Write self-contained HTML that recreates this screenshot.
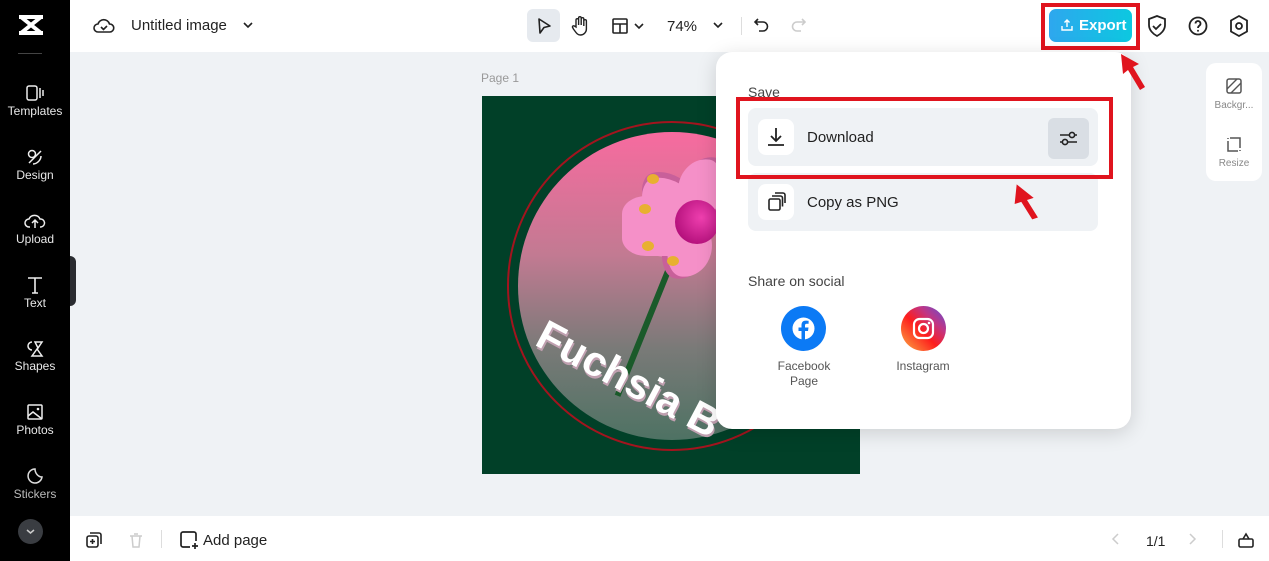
<!DOCTYPE html>
<html><head><meta charset="utf-8"><style>
*{box-sizing:border-box;margin:0;padding:0}
body{width:1269px;height:561px;overflow:hidden;font-family:"Liberation Sans",sans-serif;background:#eff2f5;position:relative;color:#1f1f1f}
.abs{position:absolute}
.side{left:0;top:0;width:70px;height:561px;background:#000}
.si{position:absolute;left:0;width:70px;text-align:center;color:#e8e8e8;font-size:12px}
.si svg{display:block;margin:0 auto 2px}
.top{left:70px;top:0;width:1199px;height:52px;background:#fff}
.bot{left:70px;top:516px;width:1199px;height:45px;background:#fff}
.pop{left:716px;top:52px;width:415px;height:377px;background:#fff;border-radius:16px;box-shadow:0 4px 20px rgba(0,0,0,.15)}
.row{position:absolute;left:32px;width:350px;height:58px;background:#eff2f5;border-radius:8px}
.ib{position:absolute;left:10px;top:11px;width:36px;height:36px;background:#fff;border-radius:8px}
.red{position:absolute;border:4px solid #e0141e}
.pet{position:absolute;width:60px;height:44px;background:#f590c8;border-radius:50% 50% 50% 50%/60% 60% 40% 40%;box-shadow:3px 5px 0 #c8609a;transform-origin:0 50%}
</style></head><body>
<div class="abs side">
 <svg class="abs" style="left:17px;top:14px" width="28" height="22" viewBox="0 0 28 22"><path d="M2 3h24M2 19h24M4 3l20 16M24 3L4 19" stroke="#fff" stroke-width="4" fill="none"/></svg>
 <div class="abs" style="left:18px;top:53px;width:24px;height:1px;background:#444"></div>
 <div class="si" style="top:84px"><svg width="20" height="18" viewBox="0 0 20 18"><rect x="2" y="2" width="10" height="14" rx="2" stroke="#eee" stroke-width="1.5" fill="none"/><path d="M15 4v10M18 6v6" stroke="#eee" stroke-width="1.5"/></svg>Templates</div>
 <div class="si" style="top:148px"><svg width="20" height="18" viewBox="0 0 20 18"><circle cx="7" cy="6" r="3.5" stroke="#eee" stroke-width="1.5" fill="none"/><path d="M4 15l12-12M8 16c4 0 8-4 8-8" stroke="#eee" stroke-width="1.5" fill="none"/></svg>Design</div>
 <div class="si" style="top:212px"><svg width="22" height="18" viewBox="0 0 22 18"><path d="M6 15H5a4 4 0 010-8 6 6 0 0111 0 4 4 0 011 8h-1M11 9v7M8 11l3-3 3 3" stroke="#eee" stroke-width="1.5" fill="none"/></svg>Upload</div>
 <div class="si" style="top:276px"><svg width="20" height="18" viewBox="0 0 20 18"><path d="M3 2h14M10 2v15M7 17h6" stroke="#eee" stroke-width="1.6" fill="none"/></svg>Text</div>
 <div class="si" style="top:339px"><svg width="20" height="18" viewBox="0 0 20 18"><path d="M7 3a4 4 0 000 8M10 3h7l-4 6zM12 10l-5 7h10z" stroke="#eee" stroke-width="1.5" fill="none"/></svg>Shapes</div>
 <div class="si" style="top:403px"><svg width="20" height="18" viewBox="0 0 20 18"><rect x="3" y="2" width="14" height="14" rx="1" stroke="#eee" stroke-width="1.5" fill="none"/><path d="M3 13l5-4 9 7" stroke="#eee" stroke-width="1.5" fill="none"/><circle cx="13" cy="6" r="1.3" fill="#eee"/></svg>Photos</div>
 <div class="si" style="top:467px;color:#bbb"><svg width="20" height="18" viewBox="0 0 20 18"><path d="M17 10a7 7 0 11-7-8c0 4 3 8 7 8z" stroke="#ddd" stroke-width="1.5" fill="none"/></svg>Stickers</div>
 <div class="abs" style="left:18px;top:519px;width:25px;height:25px;border-radius:50%;background:#3a3d42"><svg width="25" height="25" viewBox="0 0 25 25"><path d="M9 11l3.5 3 3.5-3" stroke="#ccc" stroke-width="1.5" fill="none"/></svg></div>
</div>
<div class="abs" style="left:70px;top:256px;width:6px;height:50px;background:#2a2c30;border-radius:0 6px 6px 0"></div>
<div class="abs top">
 <svg class="abs" style="left:23px;top:16px" width="22" height="20" viewBox="0 0 22 20"><path d="M6 16H5a4 4 0 010-8 6 6 0 0111.5 0A4 4 0 0117 16z M8 11l2.5 2.5L14 10" stroke="#222" stroke-width="1.6" fill="none"/></svg>
 <div class="abs" style="left:61px;top:17px;font-size:15px;color:#222">Untitled image</div>
 <svg class="abs" style="left:172px;top:19px" width="12" height="12" viewBox="0 0 12 12"><path d="M2 4l4 4 4-4" stroke="#222" stroke-width="1.6" fill="none"/></svg>
 <div class="abs" style="left:457px;top:9px;width:33px;height:33px;background:#e6eaef;border-radius:6px"></div>
 <svg class="abs" style="left:464px;top:16px" width="20" height="20" viewBox="0 0 20 20"><path d="M5 3l11 7-6 1.5L6 17z" stroke="#222" stroke-width="1.6" fill="none" stroke-linejoin="round"/></svg>
 <svg class="abs" style="left:500px;top:15px" width="20" height="22" viewBox="0 0 20 22"><path d="M6 12V5a1.3 1.3 0 012.6 0v5V3a1.3 1.3 0 012.6 0v7V4a1.3 1.3 0 012.6 0v7V6a1.3 1.3 0 012.6 0v8a6 6 0 01-6 6c-3 0-4-2-7-6l-1-2a1.3 1.3 0 012-1z" stroke="#222" stroke-width="1.4" fill="none"/></svg>
 <svg class="abs" style="left:541px;top:17px" width="34" height="18" viewBox="0 0 34 18"><rect x="2" y="2" width="14" height="14" rx="1" stroke="#222" stroke-width="1.6" fill="none"/><path d="M2 7h14M9 7v9M24 7l4 4 4-4" stroke="#222" stroke-width="1.6" fill="none"/></svg>
 <div class="abs" style="left:597px;top:18px;font-size:15px;color:#222">74%</div>
 <svg class="abs" style="left:642px;top:19px" width="12" height="12" viewBox="0 0 12 12"><path d="M2 4l4 4 4-4" stroke="#222" stroke-width="1.6" fill="none"/></svg>
 <div class="abs" style="left:671px;top:17px;width:1px;height:18px;background:#ddd"></div>
 <svg class="abs" style="left:683px;top:16px" width="18" height="18" viewBox="0 0 18 18"><path d="M5 3L2 6l3 3M2 6h8a4.5 4.5 0 010 9H6" stroke="#222" stroke-width="1.6" fill="none"/></svg>
 <svg class="abs" style="left:719px;top:16px" width="18" height="18" viewBox="0 0 18 18"><path d="M13 3l3 3-3 3M16 6H8a4.5 4.5 0 000 9h4" stroke="#ccc" stroke-width="1.6" fill="none"/></svg>
 <div class="abs" style="left:979px;top:9px;width:83px;height:33px;border-radius:7px;background:linear-gradient(90deg,#2ea7ee,#0cc8e0);color:#fff;font-weight:bold;font-size:15px;line-height:33px;padding-left:30px">Export</div>
 <svg class="abs" style="left:990px;top:18px" width="14" height="14" viewBox="0 0 14 14"><path d="M2 8v4h10V8M7 9V2M4.5 4.5L7 2l2.5 2.5" stroke="#fff" stroke-width="1.4" fill="none"/></svg>
 <div class="red" style="left:971px;top:3px;width:99px;height:47px"></div>
 <svg class="abs" style="left:1076px;top:14px" width="22" height="24" viewBox="0 0 22 24"><path d="M11 2l8 3v6c0 5-4 9-8 11-4-2-8-6-8-11V5z M7 12l3 3 5-5" stroke="#222" stroke-width="1.8" fill="none"/></svg>
 <svg class="abs" style="left:1117px;top:15px" width="22" height="22" viewBox="0 0 22 22"><circle cx="11" cy="11" r="8.5" stroke="#222" stroke-width="1.8" fill="none"/><path d="M8.5 8.5a2.5 2.5 0 114 2c-1 .7-1.5 1.2-1.5 2.5" stroke="#222" stroke-width="1.8" fill="none"/><circle cx="11" cy="15.8" r="1" fill="#222"/></svg>
 <svg class="abs" style="left:1158px;top:14px" width="22" height="24" viewBox="0 0 22 24"><path d="M11 2l8 4.5v11L11 22l-8-4.5v-11z" stroke="#222" stroke-width="1.8" fill="none"/><circle cx="11" cy="12" r="3" stroke="#222" stroke-width="1.8" fill="none"/></svg>
</div>
<div class="abs" style="left:481px;top:71px;font-size:12px;color:#999">Page 1</div>
<div class="abs" style="left:482px;top:96px;width:378px;height:378px;background:#014028;overflow:hidden">
 <div class="abs" style="left:25px;top:25px;width:330px;height:330px;border-radius:50%;border:2px solid #a3141e"></div>
 <div class="abs" style="left:36px;top:36px;width:308px;height:308px;border-radius:50%;background:linear-gradient(180deg,#f76b9f 0%,#c27a92 40%,#7a7a78 70%,#4e7263 100%)"></div>
 <div class="abs" style="left:185px;top:170px;width:6px;height:140px;background:#1a5a2a;transform:rotate(22deg);transform-origin:top"></div>
 <div class="pet" style="left:213px;top:100px;transform:rotate(-150deg)"></div>
 <div class="pet" style="left:213px;top:100px;transform:rotate(150deg)"></div>
 <div class="pet" style="left:213px;top:100px;transform:rotate(-80deg)"></div>
 <div class="pet" style="left:213px;top:100px;transform:rotate(100deg)"></div>
 <div class="abs" style="left:140px;top:100px;width:80px;height:60px;background:#f590c8;border-radius:30%"></div>
 <div class="abs" style="left:193px;top:104px;width:44px;height:44px;border-radius:50%;background:radial-gradient(circle at 60% 40%,#f040b0,#a0006a)"></div>
 <div class="abs" style="left:165px;top:78px;width:12px;height:10px;border-radius:50%;background:#e8b030"></div>
 <div class="abs" style="left:160px;top:145px;width:12px;height:10px;border-radius:50%;background:#e8b030"></div>
 <div class="abs" style="left:157px;top:108px;width:12px;height:10px;border-radius:50%;background:#e8b030"></div>
 <div class="abs" style="left:185px;top:160px;width:12px;height:10px;border-radius:50%;background:#e8b030"></div>
 <div class="abs" style="left:58px;top:211px;height:50px;line-height:50px;font-size:42px;font-weight:bold;color:#fff;transform:rotate(28deg);transform-origin:0 50%;text-shadow:2px 2px 0 #c0a0b0;white-space:nowrap">Fuchsia B</div>
</div>
<div class="abs pop">
 <div class="abs" style="left:32px;top:32px;font-size:14px;color:#444">Save</div>
 <div class="row" style="top:56px"><div class="ib"><svg width="36" height="36" viewBox="0 0 36 36"><path d="M18 9v13M13 17l5 5 5-5M10 26h16" stroke="#222" stroke-width="1.8" fill="none"/></svg></div>
  <div class="abs" style="left:59px;top:21px;font-size:15px">Download</div>
  <div class="abs" style="left:300px;top:10px;width:41px;height:41px;background:#d9dee4;border-radius:6px"><svg width="41" height="41" viewBox="0 0 41 41"><path d="M12 17h17M12 24h17" stroke="#222" stroke-width="1.6"/><circle cx="24" cy="17" r="2.6" fill="#d9dee4" stroke="#222" stroke-width="1.6"/><circle cx="17" cy="24" r="2.6" fill="#d9dee4" stroke="#222" stroke-width="1.6"/></svg></div></div>
 <div class="row" style="top:121px"><div class="ib"><svg width="36" height="36" viewBox="0 0 36 36"><rect x="11" y="15" width="11" height="11" rx="1.5" stroke="#222" stroke-width="1.6" fill="none"/><path d="M14 12h8.5a2 2 0 012 2v8.5M17 9h8a2 2 0 012 2v8" stroke="#222" stroke-width="1.6" fill="none"/></svg></div>
  <div class="abs" style="left:59px;top:21px;font-size:15px">Copy as PNG</div></div>
 <div class="abs" style="left:32px;top:221px;font-size:14px;color:#444">Share on social</div>
 <div class="abs" style="left:65px;top:254px;width:45px;height:45px;border-radius:50%;background:#0b7af5"><svg width="45" height="45" viewBox="0 0 45 45"><circle cx="22.5" cy="22.5" r="11" fill="#fff"/><path d="M24 34V25h3l.5-3.5H24v-2c0-1 .4-1.7 1.8-1.7h1.8v-3c-.5 0-1.6-.2-2.8-.2-2.7 0-4.3 1.6-4.3 4.5v2.4h-3V25h3v9" fill="#0b7af5"/></svg></div>
 <div class="abs" style="left:48px;top:307px;width:80px;text-align:center;font-size:12px;color:#555;line-height:15px">Facebook<br>Page</div>
 <div class="abs" style="left:185px;top:254px;width:45px;height:45px;border-radius:50%;background:linear-gradient(45deg,#fcb045,#fd1d1d 45%,#c13584 70%,#5b51d8)"><svg width="45" height="45" viewBox="0 0 45 45"><rect x="13" y="13" width="19" height="19" rx="5.5" stroke="#fff" stroke-width="2.2" fill="none"/><circle cx="22.5" cy="22.5" r="4.5" stroke="#fff" stroke-width="2.2" fill="none"/><circle cx="28" cy="17" r="1.3" fill="#fff"/></svg></div>
 <div class="abs" style="left:167px;top:307px;width:80px;text-align:center;font-size:12px;color:#555">Instagram</div>
</div>
<div class="red" style="left:736px;top:97px;width:377px;height:82px"></div>
<svg class="abs" style="left:1012px;top:180px" width="30" height="42" viewBox="0 0 30 42"><path d="M10 2L2 20h7l5 20h6l-5-20h7z" fill="#e0141e" transform="rotate(-18 15 20)"/></svg>
<svg class="abs" style="left:1115px;top:52px" width="34" height="42" viewBox="0 0 34 42"><path d="M6 2l2 20 5-4 12 20 5-3-12-20 6-3z" fill="#e0141e"/></svg>
<div class="abs" style="left:1206px;top:63px;width:56px;height:118px;background:#fff;border-radius:10px"></div>
<svg class="abs" style="left:1225px;top:77px" width="18" height="18" viewBox="0 0 18 18"><rect x="2" y="2" width="14" height="14" rx="2" stroke="#555" stroke-width="1.5" fill="none"/><path d="M2 12L12 2M6 16L16 6" stroke="#555" stroke-width="1.4"/></svg>
<div class="abs" style="left:1206px;top:100px;width:56px;text-align:center;font-size:10px;color:#888">Backgr...</div>
<svg class="abs" style="left:1225px;top:135px" width="18" height="18" viewBox="0 0 18 18"><path d="M3 6v10h10M5 3h10v10M3 3v1M15 16v-1" stroke="#555" stroke-width="1.5" fill="none"/></svg>
<div class="abs" style="left:1206px;top:158px;width:56px;text-align:center;font-size:10px;color:#888">Resize</div>
<div class="abs bot">
 <svg class="abs" style="left:15px;top:15px" width="18" height="18" viewBox="0 0 18 18"><rect x="2" y="5" width="11" height="11" rx="2" stroke="#222" stroke-width="1.6" fill="none"/><path d="M5 2h9a2 2 0 012 2v9M7.5 8v5M5 10.5h5" stroke="#222" stroke-width="1.6" fill="none"/></svg>
 <svg class="abs" style="left:57px;top:15px" width="18" height="18" viewBox="0 0 18 18"><path d="M3 5h12M5 5l1 11h6l1-11M7 3h4" stroke="#ccc" stroke-width="1.5" fill="none"/></svg>
 <div class="abs" style="left:91px;top:14px;width:1px;height:18px;background:#ddd"></div>
 <svg class="abs" style="left:109px;top:14px" width="20" height="20" viewBox="0 0 20 20"><path d="M11 17H4a2 2 0 01-2-2V4a2 2 0 012-2h11a2 2 0 012 2v7M16 13v6M13 16h6" stroke="#222" stroke-width="1.7" fill="none"/></svg>
 <div class="abs" style="left:133px;top:16px;font-size:15px;color:#222">Add page</div>
 <svg class="abs" style="left:1040px;top:16px" width="12" height="14" viewBox="0 0 12 14"><path d="M8 2L3 7l5 5" stroke="#ccc" stroke-width="1.5" fill="none"/></svg>
 <div class="abs" style="left:1076px;top:17px;font-size:14px;color:#222">1/1</div>
 <svg class="abs" style="left:1116px;top:16px" width="12" height="14" viewBox="0 0 12 14"><path d="M4 2l5 5-5 5" stroke="#ccc" stroke-width="1.5" fill="none"/></svg>
 <div class="abs" style="left:1152px;top:14px;width:1px;height:18px;background:#ddd"></div>
 <svg class="abs" style="left:1167px;top:15px" width="18" height="18" viewBox="0 0 18 18"><rect x="2" y="8" width="14" height="8" rx="1.5" stroke="#222" stroke-width="1.6" fill="none"/><path d="M6 8l3-5 3 5" stroke="#222" stroke-width="1.6" fill="none"/></svg>
</div>
</body></html>
